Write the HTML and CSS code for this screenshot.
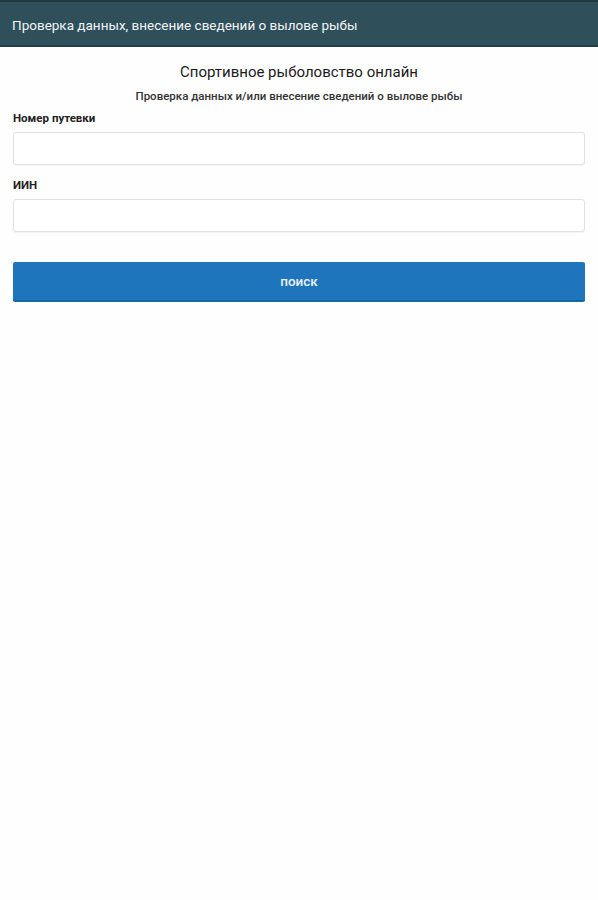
FILE: index.html
```html
<!DOCTYPE html>
<html lang="ru">
<head>
    <meta charset="UTF-8">
    <meta name="viewport" content="width=device-width, initial-scale=1.0">
    <title>Проверка данных</title>
    <link rel="stylesheet" href="styles.css">
</head>
<body>
    <header class="topbar">
        <h1>Проверка данных, внесение сведений о вылове рыбы</h1>
    </header>

    <main class="content">
        <h2 class="title">Спортивное рыболовство онлайн</h2>
        <p class="subtitle">Проверка данных и/или внесение сведений о вылове рыбы</p>

        <form class="search-form">
            <label class="field">
                <span class="field-label">Номер путевки</span>
                <input type="text" class="field-input">
            </label>
            <label class="field">
                <span class="field-label">ИИН</span>
                <input type="text" class="field-input">
            </label>
            <button type="button" class="btn-search">поиск</button>
        </form>
    </main>
</body>
</html>
```

FILE: styles.css
```css
* {
    margin: 0;
    padding: 0;
    box-sizing: border-box;
}

body {
    font-family: Roboto, 'Liberation Sans', sans-serif;
    background: #fefefe;
    min-height: 100vh;
    color: #222;
}

.topbar {
    height: 47px;
    background: #2f4f5b;
    border-top: 2px solid #24393f;
    border-bottom: 2px solid #243f48;
    display: flex;
    align-items: center;
    padding: 0 12px;
}

.topbar h1 {
    font-size: 13.5px;
    font-weight: 400;
    color: #f2f5f6;
    margin-top: 2px;
}

.content {
    padding: 16px 13px 0;
}

.title {
    text-align: center;
    font-size: 15px;
    font-weight: 400;
    color: #1a1a1a;
    line-height: 18px;
}

.subtitle {
    text-align: center;
    font-size: 11.5px;
    font-weight: 500;
    color: #333;
    margin-top: 8px;
    line-height: 14px;
}

.search-form {
    display: flex;
    flex-direction: column;
    margin-top: 8px;
}

.field {
    display: flex;
    flex-direction: column;
    margin-bottom: 13px;
}

.field-label {
    font-size: 11.5px;
    font-weight: 700;
    color: #222;
    line-height: 14px;
    margin-bottom: 7px;
}

.field-input {
    height: 33px;
    border: 1px solid #e2e2e2;
    border-radius: 3px;
    background: #fff;
    box-shadow: 0 1px 1px rgba(0,0,0,0.04);
}

.btn-search {
    margin-top: 17px;
    height: 40px;
    border: none;
    border-radius: 2px;
    background: #1f75bc;
    border-bottom: 2px solid #1a67a6;
    color: #eef4fa;
    font-family: inherit;
    font-size: 13.5px;
    font-weight: 500;
}
```
